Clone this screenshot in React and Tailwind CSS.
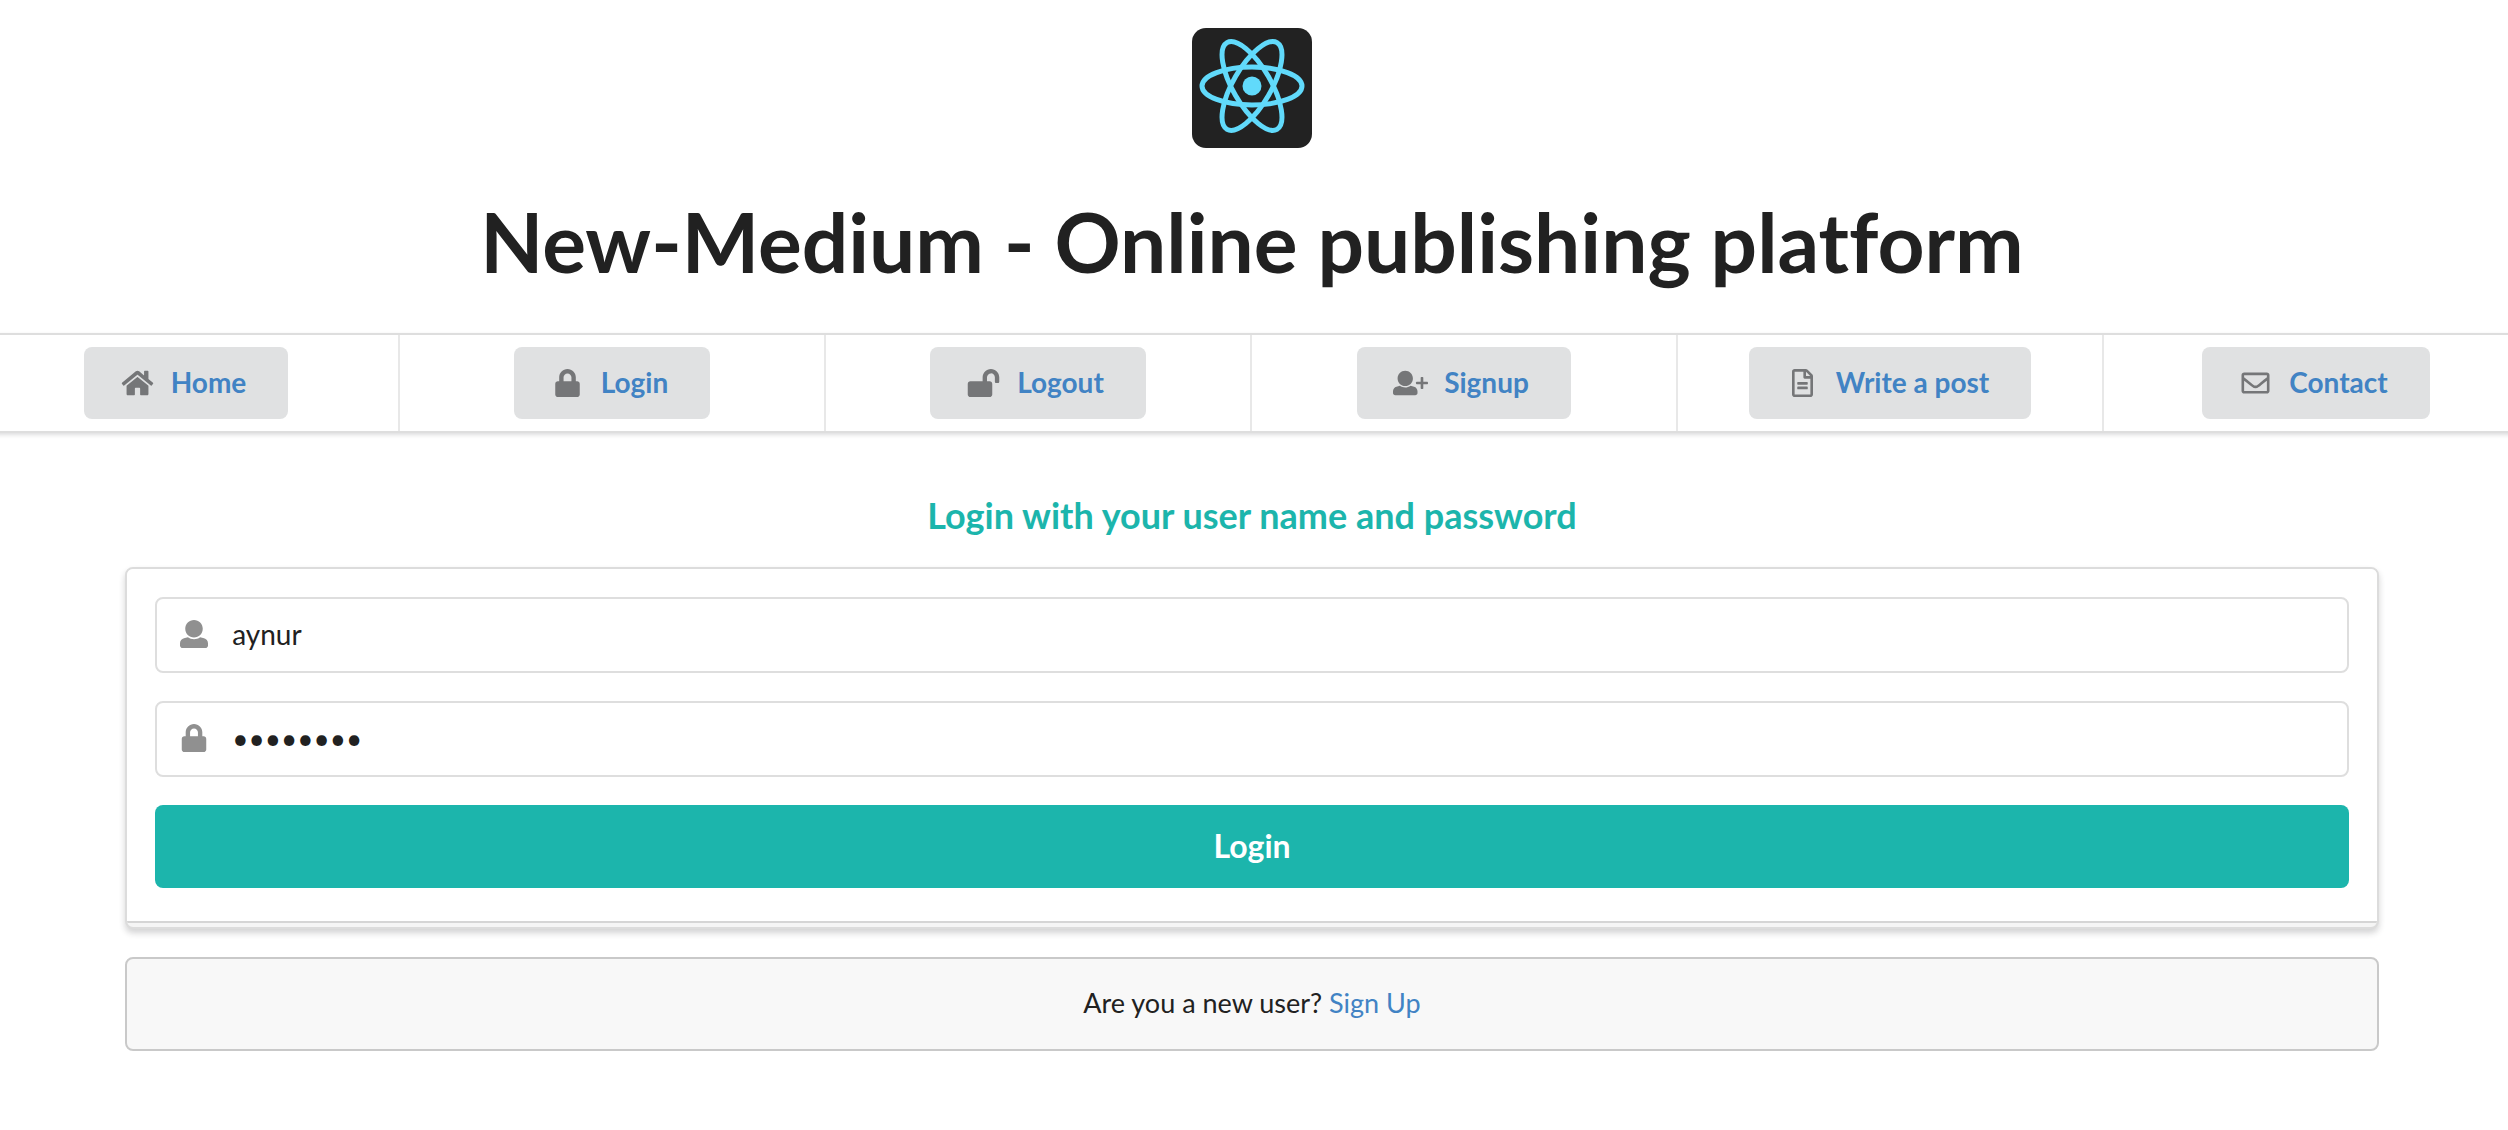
import { FaLock, FaLockOpen, FaRegFileAlt, FaRegEnvelope } from "react-icons/fa";

const USER_PATH =
  "M256 0c88.366 0 160 71.634 160 160s-71.634 160-160 160S96 248.366 96 160 167.634 0 256 0zm183.283 333.821l-71.313-17.828c-74.923 53.89-165.738 41.864-223.94 0l-71.313 17.828C29.981 344.505 0 382.903 0 426.955V464c0 26.51 21.49 48 48 48h416c26.51 0 48-21.49 48-48v-37.045c0-44.052-29.981-82.45-72.717-93.134z";

function UserIcon(props) {
  return (
    <svg viewBox="0 0 512 512" fill="currentColor" {...props}>
      <path d={USER_PATH} />
    </svg>
  );
}

function UserPlusIcon(props) {
  return (
    <svg viewBox="0 0 640 512" fill="currentColor" {...props}>
      <path d={USER_PATH} transform="translate(0 32) scale(0.875)" />
      <rect x="420" y="232" width="220" height="48" rx="14" />
      <rect x="506" y="146" width="48" height="220" rx="14" />
    </svg>
  );
}

function HomeIcon(props) {
  return (
    <svg viewBox="0 0 576 512" fill="currentColor" {...props}>
      <path d="M488 312.7V456c0 13.3-10.7 24-24 24H348c-6.6 0-12-5.4-12-12V356c0-6.6-5.4-12-12-12h-72c-6.6 0-12 5.4-12 12v112c0 6.6-5.4 12-12 12H112c-13.3 0-24-10.7-24-24V312.7c0-3.6 1.6-7 4.4-9.3l188-154.8c4.4-3.6 10.8-3.6 15.3 0l188 154.8c2.7 2.3 4.3 5.7 4.3 9.3zm83.6-60.9L488 182.9V44.4c0-6.6-5.4-12-12-12h-56c-6.6 0-12 5.4-12 12V117l-89.5-73.7c-17.7-14.6-43.3-14.6-61 0L4.4 251.8c-5.1 4.2-5.8 11.8-1.6 16.9l25.5 31c4.2 5.1 11.8 5.8 16.9 1.6l235.2-193.7c4.4-3.6 10.8-3.6 15.3 0l235.2 193.7c5.1 4.2 12.7 3.5 16.9-1.6l25.5-31c4.2-5.2 3.4-12.7-1.7-16.9z" />
    </svg>
  );
}

const navItems = [
  { label: "Home", Icon: HomeIcon },
  { label: "Login", Icon: FaLock },
  { label: "Logout", Icon: FaLockOpen },
  { label: "Signup", Icon: UserPlusIcon },
  { label: "Write a post", Icon: FaRegFileAlt },
  { label: "Contact", Icon: FaRegEnvelope },
];

function Logo() {
  return (
    <svg viewBox="0 0 120 120" className="size-[120px]" role="img" aria-label="React">
      <rect width="120" height="120" rx="14" fill="#222222" />
      <g fill="none" stroke="#61dafb" strokeWidth="5">
        <ellipse cx="60" cy="58" rx="50" ry="19" />
        <ellipse cx="60" cy="58" rx="50" ry="19" transform="rotate(60 60 58)" />
        <ellipse cx="60" cy="58" rx="50" ry="19" transform="rotate(120 60 58)" />
      </g>
      <circle cx="60" cy="58" r="9.5" fill="#61dafb" />
    </svg>
  );
}

function Field({ label, type, value, Icon }) {
  return (
    <div className="relative mb-7">
      <Icon aria-hidden="true" className="absolute left-[25px] top-[23px] size-7 text-[#909090]" />
      <input
        type={type}
        aria-label={label}
        defaultValue={value}
        className="block h-[76px] w-full rounded-lg border-2 border-[#dedede] bg-transparent pb-0.5 pl-[75px] pr-7 text-[28px] leading-[34px] text-[#212121] outline-none"
      />
    </div>
  );
}

export default function App() {
  return (
    <div className="overflow-x-hidden bg-white pr-1 font-[Lato,sans-serif] text-[28px] leading-10 text-[#212121] [font-variant-ligatures:none]">
      <header className="flex flex-col items-center pt-7">
        <Logo />
        <h1 className="mt-[39px] text-center text-[82px] font-bold leading-[108px]">
          New-Medium - Online publishing platform
        </h1>
      </header>

      <nav className="-mx-[26px] mt-[38px] grid h-[100px] grid-cols-6 border-y-2 border-[#dedede] shadow-[0_2px_4px_rgba(34,36,38,0.15)]">
        {navItems.map(({ label, Icon }) => (
          <div key={label} className="flex items-center justify-center border-r-2 border-[#e8e8e8]">
            <button type="button" className="flex h-[72px] items-center rounded-lg bg-[#e0e1e2] pl-9 pr-[42px] text-[28px] font-bold leading-7 text-[#4183c4]">
              <Icon aria-hidden="true" className="mr-4 h-7 w-[35px] text-[#757678]" />
              <span className="pb-0.5">{label}</span>
            </button>
          </div>
        ))}
      </nav>

      <main className="mx-auto w-[90%] pt-[59px]">
        <h2 className="text-center text-4xl font-bold leading-[46px] text-[#1cb5ac]">
          Login with your user name and password
        </h2>
        <form
          onSubmit={(e) => e.preventDefault()}
          className="mt-[29px] overflow-hidden rounded-lg border-2 border-[#dcdcdc] bg-[#f5f5f5] pb-1 shadow-[0_4px_6px_rgba(34,36,38,0.2)]"
        >
          <div className="border-b-2 border-[#d5d5d5] bg-white px-7 pb-[33px] pt-7">
            <Field label="User name" type="text" value="aynur" Icon={UserIcon} />
            <Field label="Password" type="password" value="password" Icon={FaLock} />
            <button type="submit" className="block h-[83px] w-full rounded-lg bg-[#1cb5ac] pb-0.5 text-[32px] font-bold leading-8 text-white">
              Login
            </button>
          </div>
        </form>
        <p className="mt-7 rounded-lg border-2 border-[#c9c9c9] bg-[#f8f8f8] pb-[26px] pt-6 text-center text-[27px] leading-10">
          Are you a new user? <a href="#signup" className="text-[#4183c4]">Sign Up</a>
        </p>
      </main>
    </div>
  );
}
